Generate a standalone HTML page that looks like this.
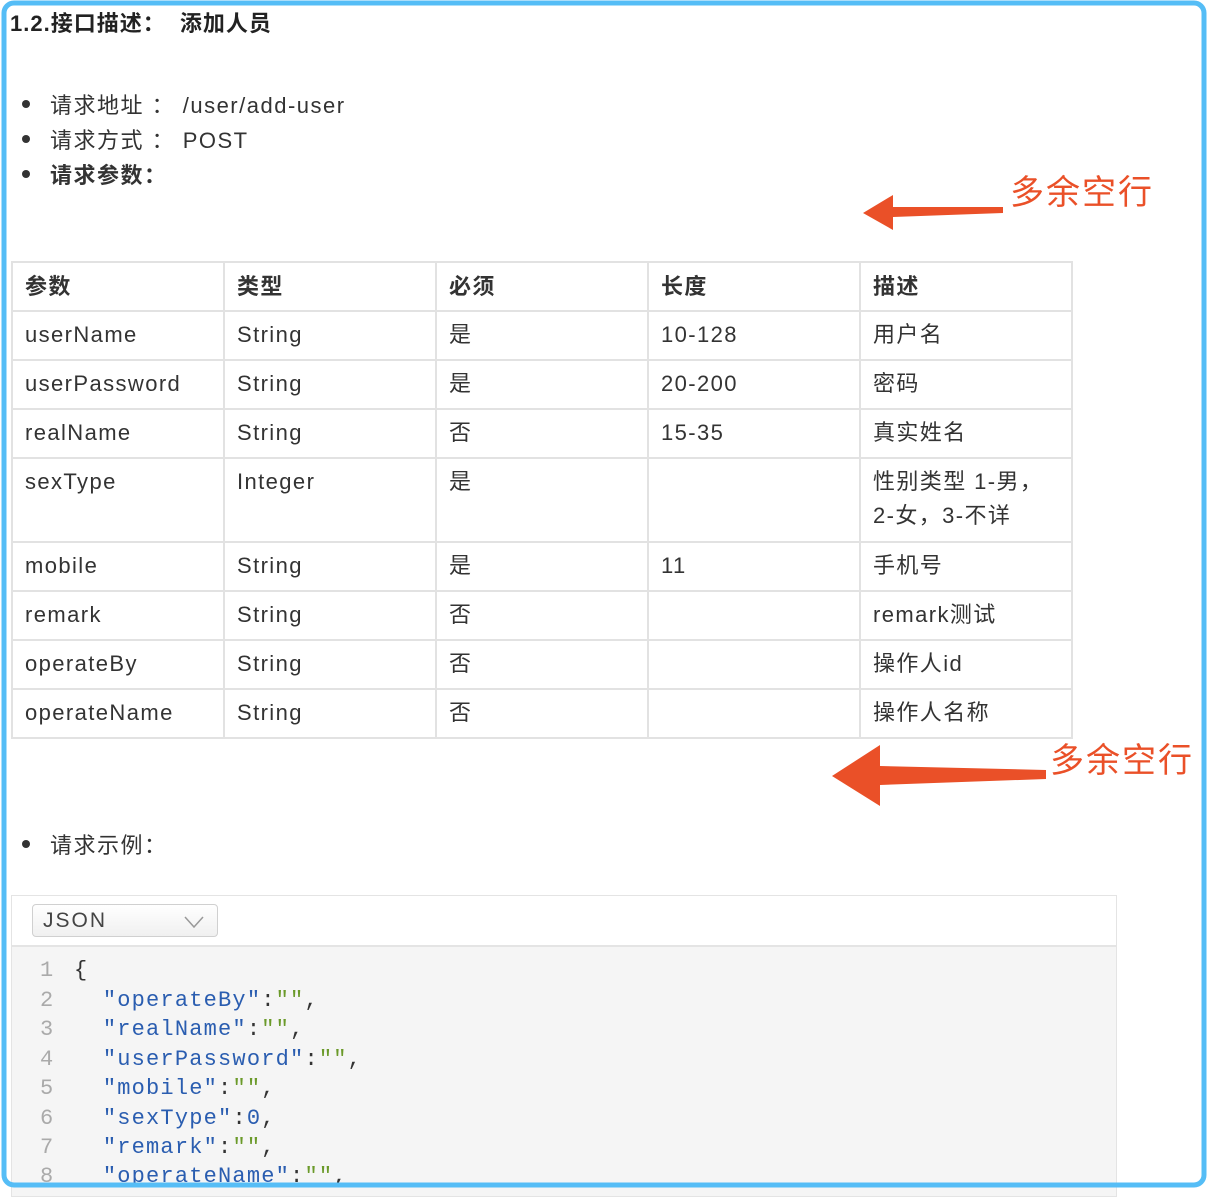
<!DOCTYPE html>
<html><head><meta charset="utf-8"><style>
body{margin:0;width:1208px;height:1192px;background:#fff;position:relative;overflow:hidden;font-family:"Liberation Sans","Noto Sans CJK SC",sans-serif;color:#333;}
.a{position:absolute;white-space:nowrap;}
.t{font-size:22px;letter-spacing:1.5px;}
.b{position:absolute;left:2px;top:12px;width:8px;height:8px;border-radius:50%;background:#333;}
.li{position:absolute;left:20px;padding-left:30px;white-space:nowrap;}
table{position:absolute;left:11px;top:261px;border-collapse:collapse;table-layout:fixed;width:1060px;}
td,th{border:2px solid #e2e2e2;width:212px;padding:0 12px;font-size:22px;letter-spacing:1.4px;vertical-align:top;line-height:34px;box-sizing:border-box;text-align:left;}
td{padding-top:6px;height:49px;}
th{height:49px;padding-top:7px;}
.code{position:absolute;left:11px;top:895px;width:1104px;height:300px;border:1px solid #e4e4e4;background:#f5f5f5;}
.hd{height:49px;background:#fff;border-bottom:2px solid #e4e4e4;position:relative;}
.sel{position:absolute;left:20px;top:8px;width:186px;height:33px;border:1px solid #d0d0d0;border-radius:4px;background:linear-gradient(#fff,#f0f0f0);font-size:21px;letter-spacing:2px;line-height:32px;padding-left:10px;box-sizing:border-box;color:#444;}
.ln{position:absolute;left:28px;width:20px;color:#aaa;font-family:"Liberation Mono",monospace;font-size:22px;}
.cd{position:absolute;left:62px;font-family:"Liberation Mono",monospace;font-size:22px;letter-spacing:1.2px;color:#333;white-space:pre;}
.k{color:#2a5db0}.s{color:#6b9a2a}
.red{color:#ea5028;font-size:34px;letter-spacing:2px;}
</style></head><body>
<div class="a" style="left:10px;top:6px;font-size:22px;font-weight:bold;color:#222;letter-spacing:1px;">1.2.接口描述：&nbsp; 添加人员</div>
<div class="li t" style="top:88px;"><span class="b"></span>请求地址 ： /user/add-user</div>
<div class="li t" style="top:123px;"><span class="b"></span>请求方式 ： POST</div>
<div class="li t" style="top:158px;font-weight:bold;"><span class="b"></span>请求参数：</div>
<table>
<tr><th>参数</th><th>类型</th><th>必须</th><th>长度</th><th>描述</th></tr>
<tr><td>userName</td><td>String</td><td>是</td><td>10-128</td><td>用户名</td></tr>
<tr><td>userPassword</td><td>String</td><td>是</td><td>20-200</td><td>密码</td></tr>
<tr><td>realName</td><td>String</td><td>否</td><td>15-35</td><td>真实姓名</td></tr>
<tr><td style="height:84px">sexType</td><td>Integer</td><td>是</td><td></td><td>性别类型 1-男，<br>2-女，3-不详</td></tr>
<tr><td>mobile</td><td>String</td><td>是</td><td>11</td><td>手机号</td></tr>
<tr><td>remark</td><td>String</td><td>否</td><td></td><td>remark测试</td></tr>
<tr><td>operateBy</td><td>String</td><td>否</td><td></td><td>操作人id</td></tr>
<tr><td>operateName</td><td>String</td><td>否</td><td></td><td>操作人名称</td></tr>
</table>
<div class="li t" style="top:828px;"><span class="b"></span>请求示例：</div>
<div class="code">
<div class="hd"><div class="sel">JSON<svg style="position:absolute;right:12px;top:10px" width="22" height="14"><path d="M2 2 L11 12 L20 2" fill="none" stroke="#999" stroke-width="1.5"/></svg></div></div>
<div class="ln" style="top:62px">1</div><div class="cd" style="top:62px">{</div>
<div class="ln" style="top:92px">2</div><div class="cd" style="top:92px">  <span class="k">"operateBy"</span>:<span class="s">""</span>,</div>
<div class="ln" style="top:121px">3</div><div class="cd" style="top:121px">  <span class="k">"realName"</span>:<span class="s">""</span>,</div>
<div class="ln" style="top:151px">4</div><div class="cd" style="top:151px">  <span class="k">"userPassword"</span>:<span class="s">""</span>,</div>
<div class="ln" style="top:180px">5</div><div class="cd" style="top:180px">  <span class="k">"mobile"</span>:<span class="s">""</span>,</div>
<div class="ln" style="top:210px">6</div><div class="cd" style="top:210px">  <span class="k">"sexType"</span>:<span class="k">0</span>,</div>
<div class="ln" style="top:239px">7</div><div class="cd" style="top:239px">  <span class="k">"remark"</span>:<span class="s">""</span>,</div>
<div class="ln" style="top:268px">8</div><div class="cd" style="top:268px">  <span class="k">"operateName"</span>:<span class="s">""</span>,</div>
</div>
<div class="a red" style="left:1010px;top:165px;">多余空行</div>
<div class="a red" style="left:1050px;top:733px;">多余空行</div>
<svg class="a" style="left:0;top:0" width="1208" height="1192">
<path d="M1003 207 L1003 213 L893 217 L893 230 L863 213 L893 195 L893 207 Z" fill="#ea5028"/>
<path d="M1046 770 L1046 779 L880 785 L880 806 L832 776 L880 745 L880 766 Z" fill="#ea5028"/>
<rect x="4" y="3" width="1200" height="1182" rx="10" fill="none" stroke="#55bdf6" stroke-width="5"/>
</svg>
</body></html>
